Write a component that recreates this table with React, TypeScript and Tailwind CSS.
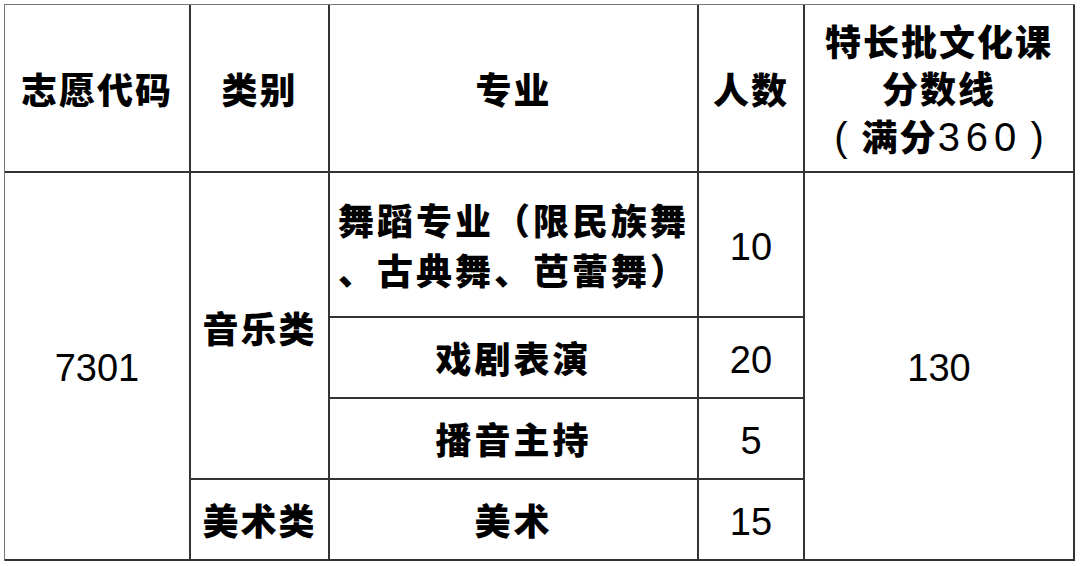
import React from 'react';

const cjk = "font-['Liberation_Sans','Noto_Sans_CJK_SC',sans-serif]";

function Cell({
  className = '',
  children,
}: {
  className?: string;
  children: React.ReactNode;
}) {
  return (
    <div
      className={`flex items-center justify-center text-center border-r-2 border-b-2 border-[#333] text-black ${className}`}
    >
      {children}
    </div>
  );
}

function Head({ children, className = '' }: { children: React.ReactNode; className?: string }) {
  return (
    <Cell className={`font-black text-[36px] leading-[47px] tracking-[2px] pt-[6px] ${className}`}>
      <div>{children}</div>
    </Cell>
  );
}

function Major({ children, className = '' }: { children: React.ReactNode; className?: string }) {
  return (
    <Cell className={`col-start-3 font-black text-[36px] leading-[50px] tracking-[3px] pt-[6px] ${className}`}>
      <div className="whitespace-nowrap">{children}</div>
    </Cell>
  );
}

function Num({ children, className = '' }: { children: React.ReactNode; className?: string }) {
  return (
    <Cell className={`text-[38px] leading-[50px] pt-[4px] ${className}`}>
      <span>{children}</span>
    </Cell>
  );
}

export default function App() {
  return (
    <div className={`w-[1080px] h-[566px] bg-white pl-[4px] pt-[4px] ${cjk}`}>
      <div className="grid w-fit grid-cols-[186px_139px_369px_106px_270px] grid-rows-[168px_145px_81px_81px_81px] border-t border-l border-[#777]">
        <Head className="col-start-1 row-start-1">志愿代码</Head>
        <Head className="col-start-2 row-start-1">类别</Head>
        <Head className="col-start-3 row-start-1">专业</Head>
        <Head className="col-start-4 row-start-1">人数</Head>
        <Head className="col-start-5 row-start-1">
          特长批文化课
          <br />
          分数线
          <br />
          <span className="whitespace-nowrap">
            <span className="font-normal text-[40px] tracking-normal mr-[14px]">(</span>
            满分
            <span className="font-normal tracking-[6px] text-[40px]">360</span>
            <span className="font-normal text-[40px] tracking-normal ml-[8px]">)</span>
          </span>
        </Head>

        <Num className="col-start-1 row-start-2 row-span-4">7301</Num>
        <Cell className="col-start-2 row-start-2 row-span-3 font-black text-[36px] tracking-[2px] pt-[10px]">
          <span>音乐类</span>
        </Cell>

        <Major className="row-start-2">
          舞蹈专业（限民族舞
          <br />
          、古典舞、芭蕾舞）
        </Major>
        <Num className="col-start-4 row-start-2">10</Num>
        <Num className="col-start-5 row-start-2 row-span-4">130</Num>

        <Major className="row-start-3">戏剧表演</Major>
        <Num className="col-start-4 row-start-3">20</Num>

        <Major className="row-start-4">播音主持</Major>
        <Num className="col-start-4 row-start-4">5</Num>

        <Cell className="col-start-2 row-start-5 font-black text-[36px] tracking-[2px] pt-[6px]">
          <span>美术类</span>
        </Cell>
        <Major className="row-start-5">美术</Major>
        <Num className="col-start-4 row-start-5">15</Num>
      </div>
    </div>
  );
}
